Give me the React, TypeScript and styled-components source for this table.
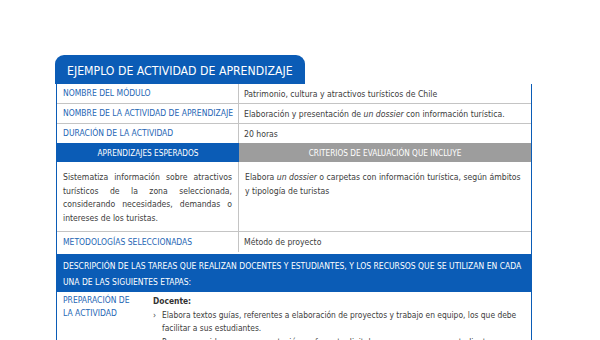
import styled, { createGlobalStyle } from "styled-components";

const BLUE = "#0b5cb6";
const LABEL = "#2466b4";
const TEXT = "#3c3c3c";
const LINE = "#c4c4c4";

const GlobalStyle = createGlobalStyle`
  body {
    margin: 0;
    background: #fff;
    font-family: "DejaVu Sans Condensed", "Liberation Sans", sans-serif;
  }
`;

const Page = styled.main`
  padding: 55px 0 0 55px;
  width: 477px;
`;

const Tab = styled.div`
  width: 250px;
  height: 29px;
  box-sizing: border-box;
  padding: 2px 0 0 12px;
  display: flex;
  align-items: center;
  background: ${BLUE};
  border-radius: 9px 9px 0 0;
  color: #fff;
  font-size: 12.2px;
  white-space: nowrap;
`;

const Table = styled.section`
  margin-left: 1px;
  border-left: 1px solid ${BLUE};
  border-right: 1px solid ${BLUE};
  font-size: 8.6px;
  color: ${TEXT};
`;

const Row = styled.div<{ $cols?: string; $h?: number; $top?: boolean }>`
  display: grid;
  grid-template-columns: ${(p) => p.$cols ?? "182px 1fr"};
  min-height: ${(p) => p.$h ?? 19}px;
  border-top: ${(p) => (p.$top === false ? "none" : `1px solid ${LINE}`)};
`;

const Label = styled.div<{ $divider?: boolean; $center?: boolean }>`
  display: flex;
  align-items: ${(p) => (p.$center === false ? "flex-start" : "center")};
  padding: ${(p) => (p.$center === false ? "2px 6px 0" : "0 6px")};
  color: ${LABEL};
  font-size: 8.5px;
  text-transform: uppercase;
  line-height: 13px;
  white-space: ${(p) => (p.$center === false ? "normal" : "nowrap")};
  border-right: ${(p) => (p.$divider === false ? "none" : `1px solid ${LINE}`)};
`;

const Value = styled.div`
  display: flex;
  align-items: center;
  padding: 0 5px;
  white-space: nowrap;
`;

const HeadCell = styled.div<{ $bg: string }>`
  display: flex;
  align-items: center;
  justify-content: center;
  background: ${(p) => p.$bg};
  color: #fff;
  font-size: 8.2px;
  text-transform: uppercase;
`;

const Para = styled.p<{ $justify?: boolean; $divider?: boolean }>`
  margin: 0;
  padding: 9px 6px 0;
  line-height: 13.7px;
  text-align: ${(p) => (p.$justify ? "justify" : "left")};
  border-right: ${(p) => (p.$divider ? `1px solid ${LINE}` : "none")};
`;

const Band = styled.div`
  margin-top: 2px;
  padding: 4px 6px 2px;
  background: ${BLUE};
  color: #fff;
  font-size: 8.5px;
  text-transform: uppercase;
  line-height: 16px;
`;

const StageBody = styled.div`
  padding: 3px 2px 0 6px;
  font-size: 8.4px;
  line-height: 13.5px;
`;

const Who = styled.div`
  font-weight: bold;
  color: #333;
`;

const List = styled.ul`
  margin: 0;
  padding: 0;
  list-style: none;
`;

const Item = styled.li`
  position: relative;
  padding-left: 9px;
  &::before {
    content: "›";
    position: absolute;
    left: 0;
    top: 0;
  }
`;

export default function App() {
  return (
    <>
      <GlobalStyle />
      <Page>
        <Tab>EJEMPLO DE ACTIVIDAD DE APRENDIZAJE</Tab>
        <Table>
          <Row $top={false}>
            <Label>Nombre del módulo</Label>
            <Value>Patrimonio, cultura y atractivos turísticos de Chile</Value>
          </Row>
          <Row>
            <Label>Nombre de la actividad de aprendizaje</Label>
            <Value>
              Elaboración y presentación de&nbsp;<i>un dossier</i>&nbsp;con información turística.
            </Value>
          </Row>
          <Row>
            <Label>Duración de la actividad</Label>
            <Value>20 horas</Value>
          </Row>
          <Row $h={19} $top={false}>
            <HeadCell $bg={BLUE}>Aprendizajes esperados</HeadCell>
            <HeadCell $bg="#9d9d9d">Criterios de evaluación que incluye</HeadCell>
          </Row>
          <Row $h={69} $top={false}>
            <Para $justify $divider>
              Sistematiza información sobre atractivos turísticos de la zona seleccionada,
              considerando necesidades, demandas o intereses de los turistas.
            </Para>
            <Para>
              Elabora <i>un dossier</i> o carpetas con información turística, según ámbitos y
              tipología de turistas
            </Para>
          </Row>
          <Row $h={20}>
            <Label>Metodologías seleccionadas</Label>
            <Value>Método de proyecto</Value>
          </Row>
          <Band>
            Descripción de las tareas que realizan docentes y estudiantes, y los recursos que se
            utilizan en cada una de las siguientes etapas:
          </Band>
          <Row $cols="90px 1fr" $h={60} $top={false}>
            <Label $divider={false} $center={false}>
              Preparación de la actividad
            </Label>
            <StageBody>
              <Who>Docente:</Who>
              <List>
                <Item>
                  Elabora textos guías, referentes a elaboración de proyectos y trabajo en equipo,
                  los que debe facilitar a sus estudiantes.
                </Item>
                <Item>
                  Prepara un video o una presentación en formato digital, para exponer a sus
                  estudiantes
                </Item>
              </List>
            </StageBody>
          </Row>
        </Table>
      </Page>
    </>
  );
}
